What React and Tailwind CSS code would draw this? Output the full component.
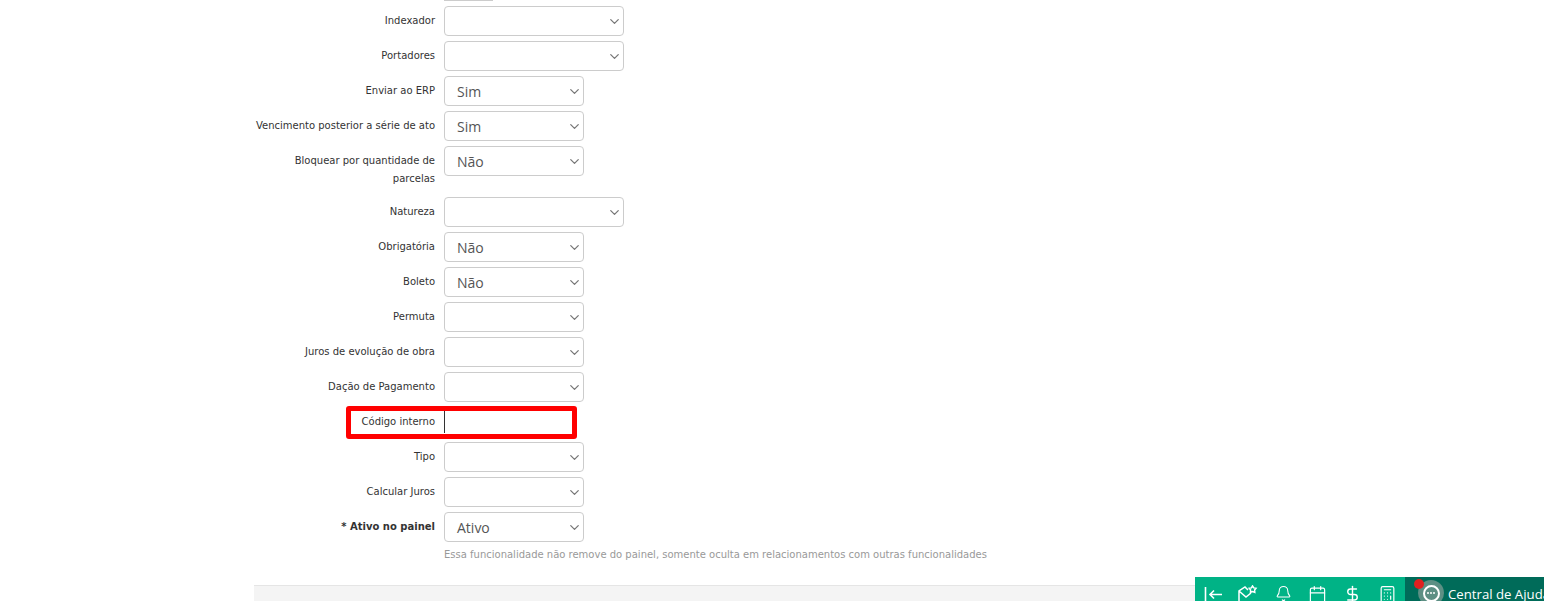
import { ChevronDown, Bell, Calendar, DollarSign, Calculator } from "lucide-react";

const labelFont = "font-['DejaVu_Sans',sans-serif] text-[10px] leading-[18px] text-[#333]";

const rows = [
    { label: "Indexador", wide: true },
    { label: "Portadores", wide: true },
    { label: "Enviar ao ERP", value: "Sim" },
    { label: "Vencimento posterior a série de ato", value: "Sim" },
    { label: "Bloquear por quantidade de parcelas", value: "Não", tall: true },
    { label: "Natureza", wide: true },
    { label: "Obrigatória", value: "Não" },
    { label: "Boleto", value: "Não" },
    { label: "Permuta" },
    { label: "Juros de evolução de obra" },
    { label: "Dação de Pagamento" },
    { label: "Código interno", input: true },
    { label: "Tipo" },
    { label: "Calcular Juros" },
    { label: "* Ativo no painel", value: "Ativo", bold: true },
];

function Select({ value, wide }) {
    return (
        <div className={`flex h-[30px] items-center justify-between rounded border border-[#ccc] bg-white pl-3 pr-[1px] ${wide ? "w-[180px]" : "w-[140px]"}`}>
            <span className="font-['Open_Sans',sans-serif] text-[14px] text-[#555]">{value}</span>
            <ChevronDown size={15} strokeWidth={2} className="text-[#777]" />
        </div>
    );
}

function Row({ row }) {
    return (
        <div className={`relative flex ${row.tall ? "mb-[9px]" : "mb-[5px]"} last:mb-0`}>
            <label className={`w-[190px] shrink-0 pt-[6px] pr-[9px] text-right ${labelFont} ${row.bold ? "font-bold text-[#222]" : ""}`}>
                {row.label}
            </label>
            {row.input ? (
                <>
                    <div className="h-[30px] w-[130px] py-1">
                        <div className="h-full w-px bg-[#333]" />
                    </div>
                    <div className="absolute left-[92px] top-[-1px] h-[33px] w-[231px] rounded-[3px] border-[5px] border-[#ff0000]" />
                </>
            ) : (
                <Select value={row.value} wide={row.wide} />
            )}
        </div>
    );
}

function BarIcon({ children }) {
    return <div className="flex w-[35px] justify-center text-white">{children}</div>;
}

export default function App() {
    return (
        <div className="relative h-[601px] w-[1544px] overflow-hidden bg-white">
            <div className="flex h-full flex-col pl-[254px]">
                <div className="ml-[190px] mb-[5px] h-px w-[49px] bg-[#ccc]" />
                <div>
                    {rows.map((row) => (
                        <Row key={row.label} row={row} />
                    ))}
                </div>
                <p className="ml-[190px] mt-[4px] font-['DejaVu_Sans',sans-serif] text-[10px] leading-[18px] text-[#999]">
                    Essa funcionalidade não remove do painel, somente oculta em relacionamentos com outras funcionalidades
                </p>
                <div className="mt-[21px] flex-1 border-t border-[#e5e5e5] bg-[#f4f4f4]" />
            </div>

            {/* barra inferior */}
            <div className="absolute bottom-0 right-0 flex h-[24px] w-[349px] overflow-hidden">
                <div className="flex w-[210px] items-start bg-[#00b386] pt-[8px] pl-[1px]">
                    <BarIcon>
                        <svg width="20" height="20" viewBox="0 0 20 20" fill="none" stroke="currentColor" strokeWidth="1.6">
                            <path d="M2.5 2v16M19 9.5H7M11 5.5l-4 4 4 4" />
                        </svg>
                    </BarIcon>
                    <BarIcon>
                        <svg width="22" height="20" viewBox="0 0 22 20" fill="none" stroke="currentColor" strokeWidth="1.5">
                            <path d="M2 16V6l6-4 3 3M2 6l7 6 5-4" />
                            <path d="M15.5 1l1.3 1.9 2.2.4-1.4 1.8.2 2.2-2.3-.8-2 .8.1-2.2-1.4-1.8 2.2-.4z" />
                        </svg>
                    </BarIcon>
                    <BarIcon>
                        <Bell size={17} strokeWidth={1.5} />
                    </BarIcon>
                    <BarIcon>
                        <Calendar size={19} strokeWidth={1.5} />
                    </BarIcon>
                    <BarIcon>
                        <DollarSign size={19} strokeWidth={1.8} />
                    </BarIcon>
                    <BarIcon>
                        <Calculator size={19} strokeWidth={1.5} />
                    </BarIcon>
                </div>
                <div className="relative flex-1 bg-[#006b59] pl-[13px] pt-[3px]">
                    <div className="flex items-start gap-[4px]">
                        <div className="flex h-[26px] w-[26px] shrink-0 items-center justify-center rounded-full bg-[#5d8f84]">
                            <div className="flex h-[17px] w-[17px] items-center justify-center gap-px rounded-full border-2 border-white">
                                <span className="h-[2px] w-[2px] rounded-full bg-white" />
                                <span className="h-[2px] w-[2px] rounded-full bg-white" />
                                <span className="h-[2px] w-[2px] rounded-full bg-white" />
                            </div>
                        </div>
                        <span className="mt-[5px] whitespace-nowrap font-['Open_Sans',sans-serif] text-[13.2px] leading-[18px] text-white">Central de Ajuda</span>
                    </div>
                    <div className="absolute left-[9px] top-[2px] h-[10px] w-[10px] rounded-full bg-[#e02020]" />
                </div>
            </div>
        </div>
    );
}
